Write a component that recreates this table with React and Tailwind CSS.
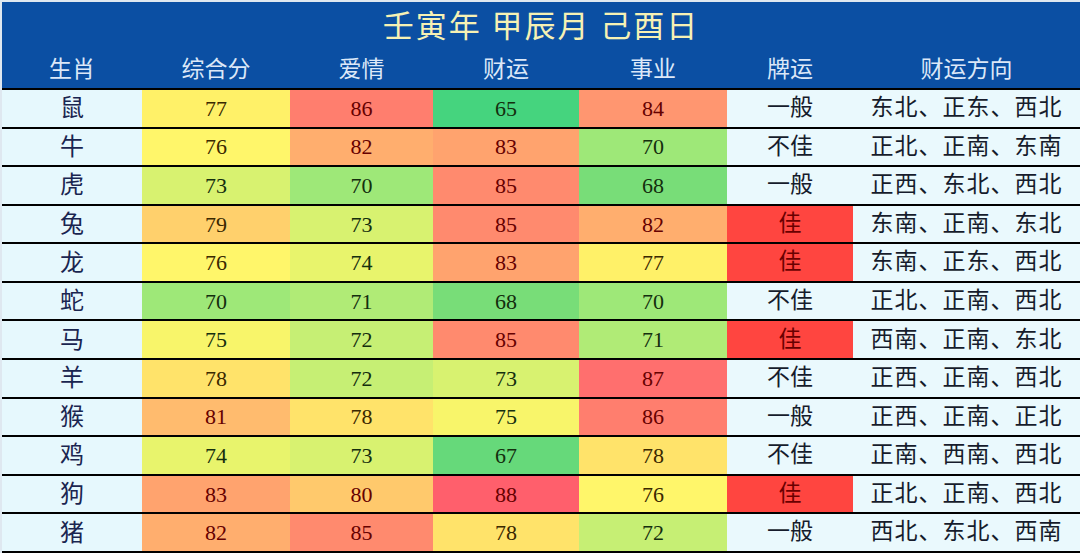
import React from "react";

const rows = [
  ["鼠", 77, 86, 65, 84, "一般", "东北、正东、西北"],
  ["牛", 76, 82, 83, 70, "不佳", "正北、正南、东南"],
  ["虎", 73, 70, 85, 68, "一般", "正西、东北、西北"],
  ["兔", 79, 73, 85, 82, "佳", "东南、正南、东北"],
  ["龙", 76, 74, 83, 77, "佳", "东南、正东、西北"],
  ["蛇", 70, 71, 68, 70, "不佳", "正北、正南、西北"],
  ["马", 75, 72, 85, 71, "佳", "西南、正南、东北"],
  ["羊", 78, 72, 73, 87, "不佳", "正西、正南、西北"],
  ["猴", 81, 78, 75, 86, "一般", "正西、正南、正北"],
  ["鸡", 74, 73, 67, 78, "不佳", "正南、西南、西北"],
  ["狗", 83, 80, 88, 76, "佳", "正北、正南、西北"],
  ["猪", 82, 85, 78, 72, "一般", "西北、东北、西南"],
];

const bg = {
  65: "bg-[#45d47e]",
  67: "bg-[#66d97a]",
  68: "bg-[#78dd78]",
  70: "bg-[#9ee878]",
  71: "bg-[#b0eb76]",
  72: "bg-[#c6ef74]",
  73: "bg-[#d8f270]",
  74: "bg-[#e8f46c]",
  75: "bg-[#f8f56a]",
  76: "bg-[#fff66a]",
  77: "bg-[#fff168]",
  78: "bg-[#ffe36a]",
  79: "bg-[#ffd06c]",
  80: "bg-[#ffc96c]",
  81: "bg-[#ffbb6e]",
  82: "bg-[#ffae6e]",
  83: "bg-[#ffa36e]",
  84: "bg-[#ff9670]",
  85: "bg-[#ff8a6e]",
  86: "bg-[#ff7e6e]",
  87: "bg-[#ff6f6e]",
  88: "bg-[#ff5f6c]",
};

const fg = (v) =>
  v >= 80 ? "text-[#660000]" : v >= 76 ? "text-[#3a2800]" : "text-[#142e0e]";

const cols =
  "grid grid-cols-[140px_148px_143px_146px_148px_126px_1fr]";

const serif = { fontFamily: '"Liberation Serif", "Noto Sans CJK SC", serif' };

const Score = ({ v }) => (
  <div className={`flex items-center justify-center text-[22px] ${bg[v]} ${fg(v)}`}>
    {v}
  </div>
);

export default function App() {
  return (
    <div
      className="w-[1080px] h-[553px] flex flex-col bg-[#e8f8fc] border-t-2 border-l-2 border-[#dfe8f0] overflow-hidden"
      style={serif}
    >
      <div className="bg-[#0b4fa3]">
        <div className="h-[50px] flex items-center justify-center text-[31px] text-[#f6f1b4] tracking-[2px]">
          壬寅年 甲辰月 己酉日
        </div>
        <div className={`${cols} h-[36px] items-center text-[23px] text-[#dce8f8] text-center`}>
          <div>生肖</div>
          <div>综合分</div>
          <div>爱情</div>
          <div>财运</div>
          <div>事业</div>
          <div>牌运</div>
          <div>财运方向</div>
        </div>
      </div>
      <div className="flex-1 flex flex-col border-t-2 border-black">
        {rows.map((r) => (
          <div key={r[0]} className={`${cols} flex-1 border-b-2 border-black`}>
            <div className="flex items-center justify-center text-[24px] text-[#1a2550] bg-[#e6f8fd]">
              {r[0]}
            </div>
            <Score v={r[1]} />
            <Score v={r[2]} />
            <Score v={r[3]} />
            <Score v={r[4]} />
            <div
              className={`flex items-center justify-center text-[23px] ${
                r[5] === "佳"
                  ? "bg-[#ff4540] text-[#6a0000]"
                  : "bg-[#eaf9fd] text-[#161c2c]"
              }`}
            >
              {r[5]}
            </div>
            <div className="flex items-center justify-center text-[23px] tracking-[1px] text-[#161c2c] bg-[#eaf9fd]">
              {r[6]}
            </div>
          </div>
        ))}
      </div>
    </div>
  );
}
